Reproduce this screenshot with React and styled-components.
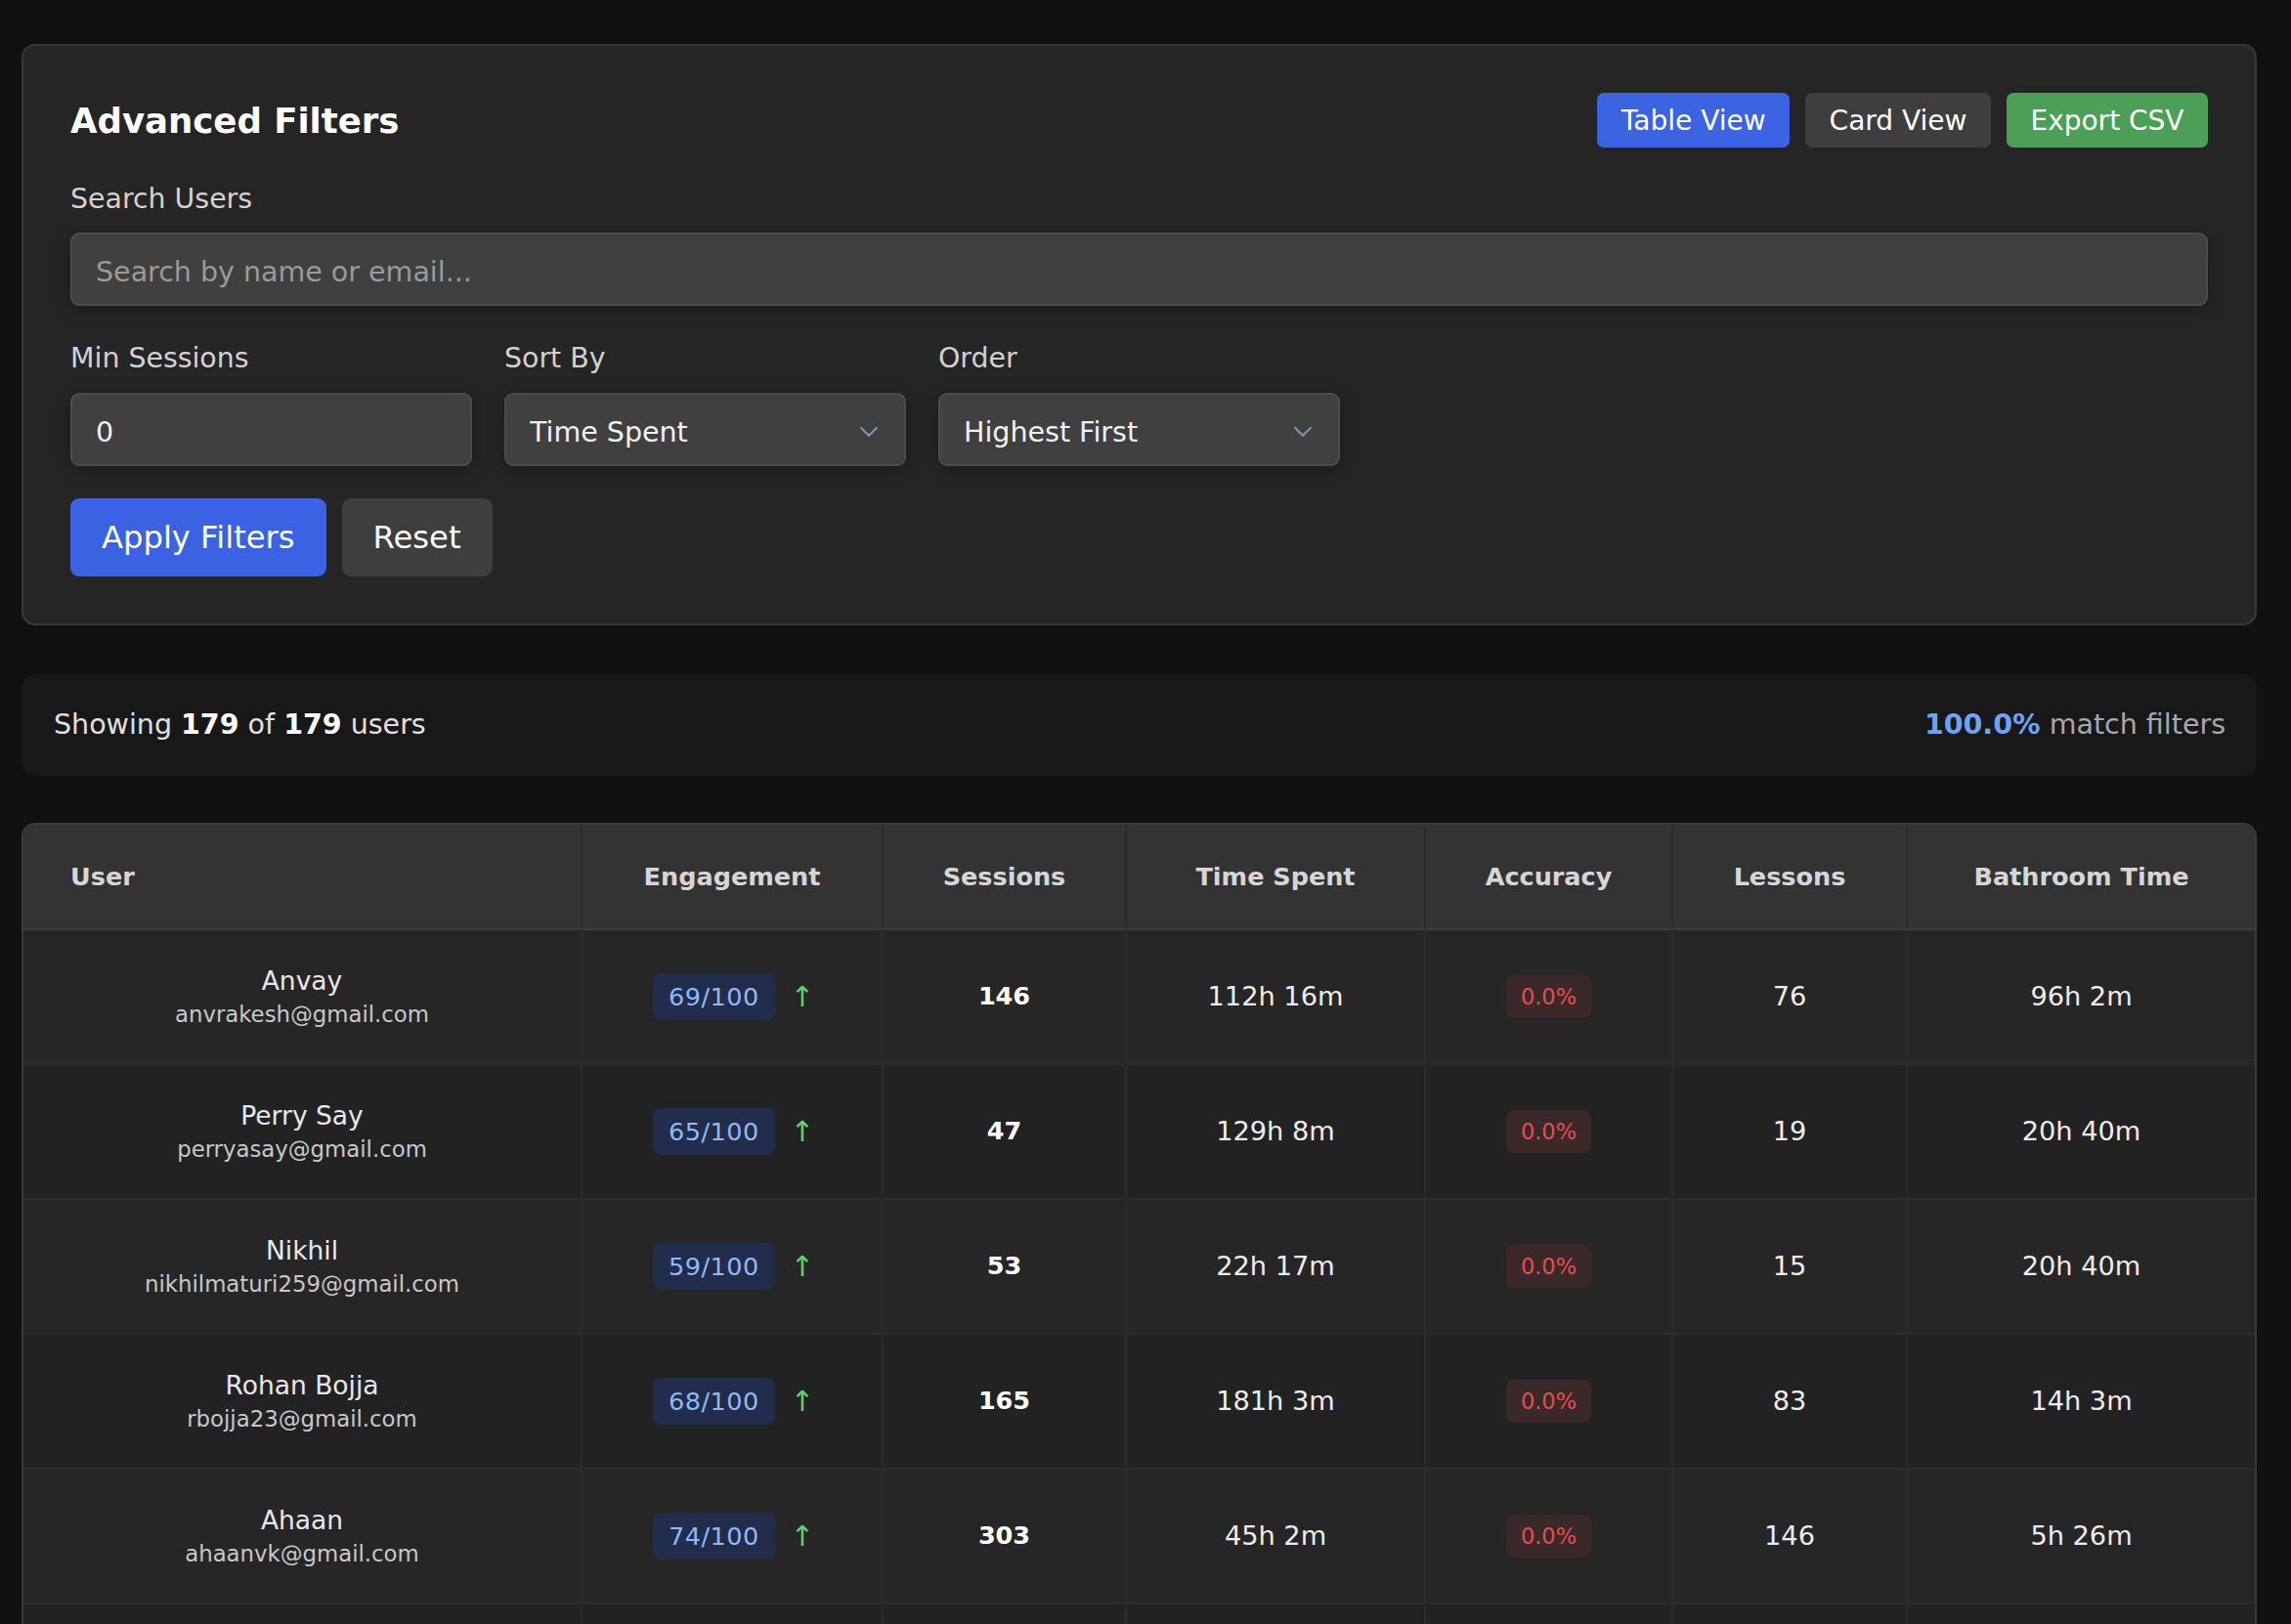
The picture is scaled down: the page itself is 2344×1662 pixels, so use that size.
import React from 'react'
import styled, { createGlobalStyle } from 'styled-components'

const GlobalStyle = createGlobalStyle`
    html {
        scrollbar-width: none;
    }
    html::-webkit-scrollbar {
        display: none;
    }
    body {
        margin: 0;
        background: #111111;
        color: #e6e6e6;
        font-family: "DejaVu Sans", "Noto Sans", sans-serif;
    }
    * {
        box-sizing: border-box;
    }
`

const users = [
    { name: 'Anvay', email: 'anvrakesh@gmail.com', engagement: 69, sessions: 146, time: '112h 16m', accuracy: '0.0%', lessons: 76, bathroom: '96h 2m' },
    { name: 'Perry Say', email: 'perryasay@gmail.com', engagement: 65, sessions: 47, time: '129h 8m', accuracy: '0.0%', lessons: 19, bathroom: '20h 40m' },
    { name: 'Nikhil', email: 'nikhilmaturi259@gmail.com', engagement: 59, sessions: 53, time: '22h 17m', accuracy: '0.0%', lessons: 15, bathroom: '20h 40m' },
    { name: 'Rohan Bojja', email: 'rbojja23@gmail.com', engagement: 68, sessions: 165, time: '181h 3m', accuracy: '0.0%', lessons: 83, bathroom: '14h 3m' },
    { name: 'Ahaan', email: 'ahaanvk@gmail.com', engagement: 74, sessions: 303, time: '45h 2m', accuracy: '0.0%', lessons: 146, bathroom: '5h 26m' },
    { name: 'Maya Iyer', email: 'mayaiyer@gmail.com', engagement: 62, sessions: 88, time: '40h 11m', accuracy: '0.0%', lessons: 41, bathroom: '4h 52m' },
]

const columns = [
    { label: 'User', width: 572, align: 'left' },
    { label: 'Engagement', width: 308 },
    { label: 'Sessions', width: 249 },
    { label: 'Time Spent', width: 306 },
    { label: 'Accuracy', width: 253 },
    { label: 'Lessons', width: 240 },
    { label: 'Bathroom Time', width: 355 },
]

const Page = styled.div`
    width: 2287px;
    margin: 0 0 0 22px;
    padding: 45px 0 60px;
`

/* Filters panel */

const Panel = styled.section`
    background: #252525;
    border: 2px solid #383838;
    border-radius: 14px;
    padding: 48px 48px 48px;
`

const PanelHeader = styled.div`
    display: flex;
    align-items: center;
    justify-content: space-between;
    height: 56px;
    margin-bottom: 37px;
`

const Title = styled.h2`
    margin: 0;
    font-size: 35.5px;
    font-weight: 700;
    color: #ffffff;
`

const ViewButtons = styled.div`
    display: flex;
    gap: 16px;
`

const tones = {
    blue: '#3b63e2',
    gray: '#3e3e3e',
    green: '#4b9f56',
}

const SmallButton = styled.button`
    height: 56px;
    padding: 0 24.5px;
    border: none;
    border-radius: 7px;
    background: ${props => tones[props.tone]};
    color: #ffffff;
    font-family: inherit;
    font-size: 28px;
    cursor: pointer;
`

const Field = styled.div`
    display: flex;
    flex-direction: column;
`

const Label = styled.label`
    font-size: 28.4px;
    line-height: 31px;
    color: #d2d2d2;
    margin-bottom: ${props => props.tight ? 20 : 19}px;
`

const inputStyles = `
    width: 100%;
    height: 75px;
    padding: 5px 24px 0;
    background: #404040;
    border: 2px solid #4c4c4c;
    border-radius: 9px;
    box-shadow: 0 4px 18px rgba(0, 0, 0, 0.28);
    color: #f2f2f2;
    font-family: inherit;
    font-size: 28.5px;
    outline: none;
`

const TextInput = styled.input`
    ${inputStyles}
    -moz-appearance: textfield;

    &::placeholder {
        color: #9a9a9a;
    }
    &::-webkit-outer-spin-button,
    &::-webkit-inner-spin-button {
        -webkit-appearance: none;
        margin: 0;
    }
`

const FilterRow = styled.div`
    display: grid;
    grid-template-columns: repeat(3, 411px);
    gap: 33px;
    margin-top: 38px;
`

const SelectWrap = styled.div`
    position: relative;
`

const Select = styled.select`
    ${inputStyles}
    appearance: none;
    -webkit-appearance: none;
    cursor: pointer;
`

const Chevron = styled.svg`
    position: absolute;
    right: 28px;
    top: 50%;
    transform: translateY(-35%);
    pointer-events: none;
`

const ActionRow = styled.div`
    display: flex;
    gap: 16px;
    margin-top: 33px;
`

const ActionButton = styled.button`
    height: 80px;
    padding: 0 32px;
    border: none;
    border-radius: 9px;
    background: ${props => props.primary ? '#3a62e2' : '#3e3e3e'};
    color: #ffffff;
    font-family: inherit;
    font-size: 32.2px;
    cursor: pointer;
`

/* Result summary */

const Summary = styled.div`
    display: flex;
    justify-content: space-between;
    align-items: center;
    margin-top: 49.5px;
    padding: 36px 32px 36px 33px;
    background: #181818;
    border-radius: 14px;
    font-size: 28.5px;
    line-height: 32px;
    color: #e0e0e0;

    strong {
        color: #ffffff;
    }
`

const MatchText = styled.span`
    color: #a8a8a8;

    strong {
        color: #6ea2f2;
    }
`

/* Users table */

const TableWrap = styled.div`
    margin-top: 48px;
    border: 2px solid #3a3a3a;
    border-radius: 14px;
    overflow: hidden;
`

const Table = styled.table`
    width: 100%;
    table-layout: fixed;
    border-collapse: separate;
    border-spacing: 0;
`

const HeadCell = styled.th`
    padding: 38px 24px 38px ${props => props.align === 'left' ? 48 : 24}px;
    background: #333333;
    border-bottom: 2px solid #3d3d3d;
    border-right: 2px solid #2b2b2b;
    text-align: ${props => props.align || 'center'};
    font-size: 25.5px;
    line-height: 30px;
    font-weight: 700;
    color: #d6d6d6;

    &:last-child {
        border-right: none;
    }
`

const Row = styled.tr`
    background: ${props => props.shade ? '#222222' : '#262626'};
`

const Cell = styled.td`
    padding: 36.5px 16px;
    border-bottom: 2px solid #2c2c2c;
    border-right: 2px solid #2b2b2b;
    text-align: center;
    vertical-align: middle;
    font-size: ${props => props.bold ? 25.5 : 27.2}px;
    line-height: 31px;
    font-weight: ${props => props.bold ? 700 : 400};
    color: ${props => props.bold ? '#ffffff' : '#ededed'};

    &:last-child {
        border-right: none;
    }
`

const UserName = styled.div`
    font-size: 26.5px;
    line-height: 31px;
    color: #e8e8e8;
    margin-bottom: 6px;
`

const UserEmail = styled.div`
    font-size: 22.8px;
    line-height: 26px;
    color: #c8c8c8;
`

const Engagement = styled.div`
    display: inline-flex;
    align-items: center;
    gap: 16px;
    margin-left: 3px;
`

const ScoreBadge = styled.span`
    display: inline-block;
    padding: 9px 16px;
    border-radius: 8px;
    background: #222c4b;
    color: #8fb9f9;
    font-size: 25.5px;
    line-height: 30px;
    letter-spacing: 0.5px;
`

const Trend = styled.span`
    color: #5fd06e;
    font-size: 29px;
    line-height: 30px;
`

const AccuracyBadge = styled.span`
    display: inline-block;
    padding: 8px 15px;
    border-radius: 8px;
    background: #3b2828;
    color: #e24f4f;
    font-size: 22.5px;
    line-height: 28px;
`

const SelectField = ({ label, value, options }) => (
    <Field>
        <Label tight>{label}</Label>
        <SelectWrap>
            <Select defaultValue={value}>
                {options.map(option => <option key={option}>{option}</option>)}
            </Select>
            <Chevron width="20" height="12" viewBox="0 0 20 12" fill="none">
                <polyline points="1.5,1.5 10,10 18.5,1.5" stroke="#8693a8" strokeWidth="2" />
            </Chevron>
        </SelectWrap>
    </Field>
)

const UserRow = ({ user, shade }) => (
    <Row shade={shade}>
        <Cell>
            <UserName>{user.name}</UserName>
            <UserEmail>{user.email}</UserEmail>
        </Cell>
        <Cell>
            <Engagement>
                <ScoreBadge>{user.engagement}/100</ScoreBadge>
                <Trend>↑</Trend>
            </Engagement>
        </Cell>
        <Cell bold>{user.sessions}</Cell>
        <Cell>{user.time}</Cell>
        <Cell>
            <AccuracyBadge>{user.accuracy}</AccuracyBadge>
        </Cell>
        <Cell>{user.lessons}</Cell>
        <Cell>{user.bathroom}</Cell>
    </Row>
)

const App = () => {
    return (
        <Page>
            <GlobalStyle />
            <Panel>
                <PanelHeader>
                    <Title>Advanced Filters</Title>
                    <ViewButtons>
                        <SmallButton tone="blue">Table View</SmallButton>
                        <SmallButton tone="gray">Card View</SmallButton>
                        <SmallButton tone="green">Export CSV</SmallButton>
                    </ViewButtons>
                </PanelHeader>

                <Field>
                    <Label>Search Users</Label>
                    <TextInput type="text" placeholder="Search by name or email..." />
                </Field>

                <FilterRow>
                    <Field>
                        <Label tight>Min Sessions</Label>
                        <TextInput type="number" defaultValue="0" />
                    </Field>
                    <SelectField label="Sort By" value="Time Spent" options={['Time Spent', 'Sessions', 'Engagement', 'Accuracy', 'Lessons']} />
                    <SelectField label="Order" value="Highest First" options={['Highest First', 'Lowest First']} />
                </FilterRow>

                <ActionRow>
                    <ActionButton primary>Apply Filters</ActionButton>
                    <ActionButton>Reset</ActionButton>
                </ActionRow>
            </Panel>

            <Summary>
                <span>Showing <strong>179</strong> of <strong>179</strong> users</span>
                <MatchText><strong>100.0%</strong> match filters</MatchText>
            </Summary>

            <TableWrap>
                <Table>
                    <colgroup>
                        {columns.map(col => <col key={col.label} style={{ width: col.width }} />)}
                    </colgroup>
                    <thead>
                        <tr>
                            {columns.map(col => <HeadCell key={col.label} align={col.align}>{col.label}</HeadCell>)}
                        </tr>
                    </thead>
                    <tbody>
                        {users.map((user, i) => <UserRow key={user.email} user={user} shade={i % 2 === 1} />)}
                    </tbody>
                </Table>
            </TableWrap>
        </Page>
    )
}

export default App
